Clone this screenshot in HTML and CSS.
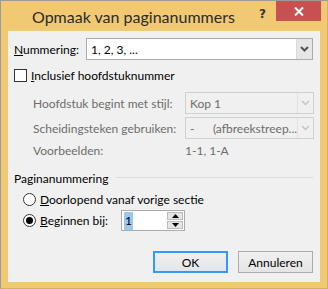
FILE: index.html
```html
<!DOCTYPE html>
<html lang="nl">
<head>
    <meta charset="UTF-8">
    <title>Opmaak van paginanummers</title>
    <link rel="stylesheet" href="styles.css">
</head>
<body>

<div class="window">
    <div class="titlebar">
        <span class="title">Opmaak van paginanummers</span>
        <span class="help">?</span>
        <span class="close">
            <svg width="10" height="9" viewBox="0 0 10 9"><path d="M1 0.5 L9 8.5 M9 0.5 L1 8.5" stroke="#fff" stroke-width="2"/></svg>
        </span>
    </div>

    <div class="content">
        <div class="row">
            <label class="row-label"><u>N</u>ummering:</label>
            <div class="select">
                <span class="select-value">1, 2, 3, ...</span>
                <span class="select-btn">
                    <svg width="9" height="6" viewBox="0 0 9 6"><path d="M1 1 L4.5 4.5 L8 1" fill="none" stroke="#555" stroke-width="2"/></svg>
                </span>
            </div>
        </div>

        <div class="check-row">
            <span class="checkbox"></span>
            <span><u>I</u>nclusief hoofdstuknummer</span>
        </div>

        <div class="chapter-grid">
            <span class="muted">Hoofdstuk begint met stijl:</span>
            <div class="select disabled">
                <span class="select-value">Kop 1</span>
                <span class="select-btn">
                    <svg width="9" height="6" viewBox="0 0 9 6"><path d="M1 1 L4.5 4.5 L8 1" fill="none" stroke="#c4c4c4" stroke-width="1.5"/></svg>
                </span>
            </div>
            <span class="muted">Scheidingsteken gebruiken:</span>
            <div class="select disabled">
                <span class="select-value">-&nbsp;&nbsp;&nbsp;&nbsp;&nbsp;&nbsp;(afbreekstreep...</span>
                <span class="select-btn">
                    <svg width="9" height="6" viewBox="0 0 9 6"><path d="M1 1 L4.5 4.5 L8 1" fill="none" stroke="#c4c4c4" stroke-width="1.5"/></svg>
                </span>
            </div>
            <span class="muted">Voorbeelden:</span>
            <span class="muted">1-1, 1-A</span>
        </div>

        <div class="group-title">
            <span>Paginanummering</span>
            <span class="group-line"></span>
        </div>

        <div class="radio-row">
            <span class="radio"></span>
            <span><u>D</u>oorlopend vanaf vorige sectie</span>
        </div>
        <div class="radio-row start">
            <span class="radio checked"></span>
            <span class="radio-label"><u>B</u>eginnen bij:</span>
            <div class="spin">
                <span class="spin-value"><span class="selected">1</span></span>
                <span class="spin-btns">
                    <span class="spin-btn">
                        <svg width="7" height="4" viewBox="0 0 7 4"><path d="M0 4 L3.5 0 L7 4 Z" fill="#000"/></svg>
                    </span>
                    <span class="spin-btn">
                        <svg width="7" height="4" viewBox="0 0 7 4"><path d="M0 0 L3.5 4 L7 0 Z" fill="#000"/></svg>
                    </span>
                </span>
            </div>
        </div>

        <div class="buttons">
            <button class="btn btn-default">OK</button>
            <button class="btn">Annuleren</button>
        </div>
    </div>
</div>

</body>
</html>
```

FILE: styles.css
```css
* {
    margin: 0;
    padding: 0;
    box-sizing: border-box;
}

body {
    width: 328px;
    height: 289px;
    font-family: Lato, "Open Sans", sans-serif;
    font-size: 12px;
    color: #000;
    overflow: hidden;
}

u {
    text-decoration: underline;
    text-underline-offset: 1px;
}

/* Venster */
.window {
    width: 328px;
    height: 289px;
    background: #f2c973;
    border: 1px solid #9a9a9a;
    border-right-color: #d6b062;
    border-bottom-color: #d6b062;
    display: flex;
    flex-direction: column;
}

.titlebar {
    height: 30px;
    display: flex;
    align-items: flex-start;
    position: relative;
}

.title {
    margin: 6px 0 0 31px;
    font-size: 16px;
    color: #2b2b2b;
}

.help {
    margin: 6px 0 0 auto;
    font-family: "DejaVu Sans", sans-serif;
    font-weight: bold;
    font-size: 12px;
    color: #333;
}

.close {
    width: 45px;
    height: 20px;
    margin: 0 6px 0 10px;
    background: #c75050;
    display: flex;
    align-items: center;
    justify-content: center;
}

.content {
    flex: 1;
    margin: 0 7px 6px 7px;
    background: #f0f0f0;
    padding: 7px 7px 0 6px;
}

/* Rijen */
.row {
    display: flex;
    align-items: center;
    height: 22px;
}

.row-label {
    width: 72px;
}

.select {
    flex: 1;
    height: 22px;
    border: 1px solid #acacac;
    background: #fff;
    display: flex;
    align-items: center;
}

.select-value {
    flex: 1;
    padding-left: 4px;
    white-space: nowrap;
    overflow: hidden;
}

.select-btn {
    width: 16px;
    height: 20px;
    margin-right: 0;
    background: #e6e6e6;
    border-left: 1px solid #dadada;
    display: flex;
    align-items: center;
    justify-content: center;
}

.select.disabled {
    background: #f0f0f0;
    border-color: #d0d0d0;
    color: #6d6d6d;
}

.select.disabled .select-btn {
    background: #f0f0f0;
    border-left-color: #e2e2e2;
}

.check-row {
    display: flex;
    align-items: center;
    height: 16px;
    margin-top: 7px;
}

.checkbox {
    width: 13px;
    height: 13px;
    border: 1px solid #333;
    background: #fff;
    margin-right: 4px;
}

.chapter-grid {
    display: grid;
    grid-template-columns: 152px 1fr;
    grid-template-rows: 22px 22px 16px;
    row-gap: 3px;
    align-items: center;
    margin: 9px 0 0 19px;
}

.muted {
    color: #6d6d6d;
}

/* Groep */
.group-title {
    display: flex;
    align-items: center;
    margin-top: 12px;
    height: 16px;
}

.group-line {
    flex: 1;
    height: 1px;
    background: #dcdcdc;
    margin: 0 0 2px 8px;
}

.radio-row {
    display: flex;
    align-items: center;
    height: 16px;
    margin: 5px 0 0 9px;
}

.radio-row.start {
    height: 21px;
    margin-top: 3px;
}

.radio {
    width: 13px;
    height: 13px;
    border-radius: 50%;
    border: 1px solid #333;
    background: #fff;
    margin-right: 4px;
    display: flex;
    align-items: center;
    justify-content: center;
}

.radio.checked::after {
    content: "";
    width: 7px;
    height: 7px;
    border-radius: 50%;
    background: #000;
}

.radio-label {
    width: 81px;
}

.spin {
    width: 64px;
    height: 21px;
    border: 1px solid #acacac;
    background: #fff;
    display: flex;
}

.spin-value {
    flex: 1;
    padding: 2px 0 0 2px;
}

.selected {
    background: #99c9ef;
    padding: 1px 1px 2px;
}

.spin-btns {
    width: 17px;
    display: flex;
    flex-direction: column;
    padding: 1px 1px 1px 0;
    gap: 1px;
}

.spin-btn {
    flex: 1;
    background: #e5e5e5;
    border: 1px solid #bcbcbc;
    display: flex;
    align-items: center;
    justify-content: center;
}

/* Knoppen */
.buttons {
    display: flex;
    justify-content: flex-end;
    gap: 10px;
    margin-top: 20px;
}

.btn {
    width: 75px;
    height: 22px;
    font-family: inherit;
    font-size: 12px;
    color: #000;
    background: linear-gradient(#f0f0f0, #e5e5e5);
    border: 1px solid #acacac;
}

.btn-default {
    border-color: #3399ff;
    box-shadow: inset 0 0 0 1px #3399ff;
}
```
